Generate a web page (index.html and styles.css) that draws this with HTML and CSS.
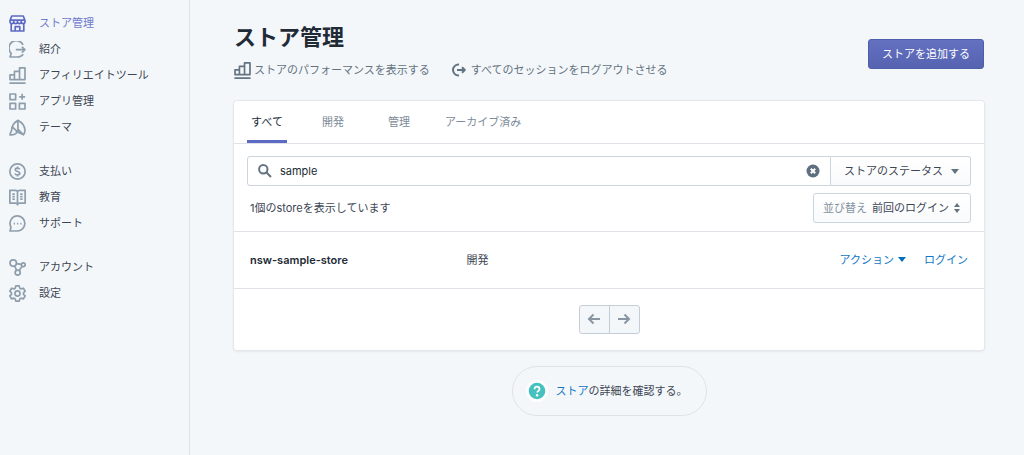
FILE: index.html
```html
<!DOCTYPE html>
<html lang="ja">
<head>
<meta charset="utf-8">
<meta name="viewport" content="width=device-width, initial-scale=1">
<title>ストア管理</title>
<link rel="stylesheet" href="styles.css">
</head>
<body>
<div class="layout">
  <nav class="sidebar" aria-label="メイン">
    <ul class="nav-group">
      <li><a class="nav-item nav-item-active" href="#stores" aria-current="page">
        <svg class="icon" viewBox="0 0 20 20"><path d="M3.2 1.2h13.600l2 5.300v1.500a2.200 2.200 0 0 1-4.400 0a2.200 2.200 0 0 1-4.400 0a2.200 2.200 0 0 1-4.400 0a2.200 2.200 0 0 1-4.400 0v-1.500zM1.500 6h17M5.600 6v2M10 6v2M14.400 6v2M2.600 10.500v8.300h14.800v-8.300M7.300 18.500v-4.800h5.400v4.800"/></svg>
        <span>ストア管理</span></a></li>
      <li><a class="nav-item" href="#referrals">
        <svg class="icon" viewBox="0 0 20 20"><path d="M16.500 4.500A8.700 8.700 0 1 0 2.600 14.500L1.200 18.800H10a8.500 8.500 0 0 0 6.800-3.300M8 10.200h10.500M15.200 6.800l3.500 3.400l-3.500 3.400"/></svg>
        <span>紹介</span></a></li>
      <li><a class="nav-item" href="#affiliate">
        <svg class="icon" viewBox="0 0 20 20"><path d="M1.200 9.200h5.200v5.600H1.200zM6.400 5.200h6v9.600h-6zM12.400 1h6.400v13.800h-6.400zM.5 19h19"/></svg>
        <span>アフィリエイトツール</span></a></li>
      <li><a class="nav-item" href="#apps">
        <svg class="icon" viewBox="0 0 20 20"><path d="M1.200 1.200h6.600v6.600H1.200zM1.200 12.200h6.600v6.600H1.200zM12.200 12.200h6.600v6.600h-6.600zM15.500 1v7M12 4.500h7"/></svg>
        <span>アプリ管理</span></a></li>
      <li><a class="nav-item" href="#themes">
        <svg class="icon" viewBox="0 0 20 20"><path d="M10.500 1.500c-3 1.800-5.500 4.300-6.700 7.700l6.700 6.300zM10.500 1.500c4.500 2.500 8 6.500 8.300 11.500c.1 2.300-.7 4-1.800 5.600L10.500 12M3.800 9.200c-1.100 1.400 0 2.300-.7 4c-.5 1.600-1.600 2.700-1.900 5.400c3 .3 5.300.1 6.800-1.300c.8-.8 1-1.900.6-3M10.500 2v11.500M10.500 15.500L17 18.600"/></svg>
        <span>テーマ</span></a></li>
    </ul>
    <ul class="nav-group">
      <li><a class="nav-item" href="#payouts">
        <svg class="icon" viewBox="0 0 20 20"><circle cx="10" cy="10" r="9"/><path d="M12.600 7.500c-.4-1-1.400-1.500-2.600-1.500c-1.500 0-2.600.7-2.600 1.900c0 2.700 5.400 1.400 5.400 4.200c0 1.200-1.200 1.900-2.800 1.900c-1.400 0-2.500-.6-2.900-1.700M10 4v2M10 14v2"/></svg>
        <span>支払い</span></a></li>
      <li><a class="nav-item" href="#education">
        <svg class="icon" viewBox="0 0 20 20"><path d="M1 1.500h6.500c1.500 0 2.500.8 2.500 2c0-1.200 1-2 2.500-2H19v15h-6.500c-1.300 0-2.500.6-2.500 2c0-1.400-1.200-2-2.500-2H1zM10 3.500V19M4 6h2.800M4 9h2.800M4 12h2.800M13.200 6H16M13.200 9H16M13.200 12H16"/></svg>
        <span>教育</span></a></li>
      <li><a class="nav-item" href="#support">
        <svg class="icon" viewBox="0 0 20 20"><path d="M10.200 1a8.900 8.900 0 1 1-1 17.800H1.200l1.200-4.500A8.900 8.900 0 0 1 10.200 1z"/><path d="M5.500 10.200h1.500M9.400 10.200h1.500M13.300 10.200h1.500"/></svg>
        <span>サポート</span></a></li>
    </ul>
    <ul class="nav-group">
      <li><a class="nav-item" href="#account">
        <svg class="icon" viewBox="0 0 20 20"><circle cx="5" cy="4.800" r="3.800"/><circle cx="16.800" cy="6.800" r="2.200"/><circle cx="10.200" cy="16" r="3"/><path d="M8.800 5.400l5.800 1M6.700 8.200l2.200 5M15.500 8.600l-3.600 4.900"/></svg>
        <span>アカウント</span></a></li>
      <li><a class="nav-item" href="#settings">
        <svg class="icon" viewBox="0 0 20 20"><path d="M8 1h4l.7 2.700l1.600.9l2.700-.8l2 3.500l-2 1.900v1.700l2 1.900l-2 3.500l-2.700-.8l-1.600.9L12 19H8l-.7-2.600l-1.600-.9l-2.700.8l-2-3.500l2-1.900V9.200l-2-1.900l2-3.500l2.700.8l1.600-.9z"/><circle cx="10" cy="10" r="3"/></svg>
        <span>設定</span></a></li>
    </ul>
  </nav>

  <main class="main">
    <header class="page-header">
      <div class="page-heading">
        <h1 class="page-title">ストア管理</h1>
        <div class="page-links">
          <a class="page-link" href="#performance">
            <svg class="icon" viewBox="0 0 20 20"><path d="M1.200 9.200h5.200v5.600H1.200zM6.400 5.200h6v9.600h-6zM12.400 1h6.400v13.800h-6.400zM.5 19h19"/></svg>
            <span>ストアのパフォーマンスを表示する</span></a>
          <a class="page-link page-link-spaced" href="#logout">
            <svg class="icon icon-small" viewBox="0 0 14 14"><path d="M7 1.500H6.500a5.500 5.500 0 0 0 0 11H7M5 7h7.500M10 4.300L12.800 7L10 9.700"/></svg>
            <span>すべてのセッションをログアウトさせる</span></a>
        </div>
      </div>
      <button class="button-primary" type="button">ストアを追加する</button>
    </header>

    <section class="card">
      <div class="tabs" role="tablist">
        <button class="tab" type="button" role="tab" aria-selected="true">すべて</button>
        <button class="tab" type="button" role="tab" aria-selected="false">開発</button>
        <button class="tab" type="button" role="tab" aria-selected="false">管理</button>
        <button class="tab" type="button" role="tab" aria-selected="false">アーカイブ済み</button>
      </div>

      <div class="filters">
        <div class="search-row">
          <div class="search-field">
            <svg class="search-icon" viewBox="0 0 14 14"><circle cx="5.300" cy="5.300" r="4.200"/><path d="M8.500 8.500l4.500 4.500"/></svg>
            <input class="search-input" type="text" value="sample" aria-label="ストアを検索">
            <button class="clear-button" type="button" aria-label="クリア">
              <svg class="clear-icon" viewBox="0 0 14 14"><circle cx="7" cy="7" r="6.500"/><path d="M4.800 4.800l4.400 4.400M9.200 4.800L4.800 9.200"/></svg>
            </button>
          </div>
          <button class="status-button" type="button" aria-haspopup="true">
            <span>ストアのステータス</span>
            <svg class="caret" viewBox="0 0 8 5"><path d="M0 0h8L4 5z"/></svg>
          </button>
        </div>
        <div class="sort-row">
          <p class="count">1個のstoreを表示しています</p>
          <div class="sort">
            <label class="sort-label" for="sort">並び替え</label>
            <select class="sort-select" id="sort"><option>前回のログイン</option></select>
            <svg class="sort-arrows" viewBox="0 0 6 10"><path d="M0 4h6L3 0zM0 6h6l-3 4z"/></svg>
          </div>
        </div>
      </div>

      <table class="stores" aria-label="ストア">
        <tbody>
          <tr>
            <th class="store-name" scope="row">nsw-sample-store</th>
            <td class="store-type">開発</td>
            <td class="store-actions">
              <div class="action-list">
                <button class="action-button" type="button" aria-haspopup="true">
                  <span>アクション</span>
                  <svg class="caret" viewBox="0 0 8 5"><path d="M0 0h8L4 5z"/></svg>
                </button>
                <a class="link" href="#login">ログイン</a>
              </div>
            </td>
          </tr>
        </tbody>
      </table>

      <div class="pagination">
        <button class="page-button" type="button" aria-label="前へ">
          <svg class="arrow" viewBox="0 0 14 12"><path d="M13 6H2M6.500 1.500L2 6l4.500 4.500"/></svg>
        </button>
        <button class="page-button" type="button" aria-label="次へ">
          <svg class="arrow" viewBox="0 0 14 12"><path d="M1 6h11M7.500 1.500L12 6l-4.500 4.500"/></svg>
        </button>
      </div>
    </section>

    <footer class="help">
      <svg class="help-icon" viewBox="0 0 22 22"><circle cx="11" cy="11" r="11" fill="#fff"/><circle cx="11" cy="11" r="8.300" fill="#47c1bf"/><path d="M8.500 9.200c0-3.400 5-3.400 5 0c0 1.800-2.400 1.700-2.400 3.400" fill="none" stroke="#fff" stroke-width="1.800"/><circle cx="11.100" cy="15.200" r="1.200" fill="#fff"/></svg>
      <p class="help-text"><a class="link" href="#help">ストア</a>の詳細を確認する。</p>
    </footer>
  </main>
</div>
</body>
</html>
```
FILE: styles.css
```css
* {
  box-sizing: border-box;
}

body {
  margin: 0;
  background: #f4f7fa;
  color: #3c4654;
  font-family: Inter, "Noto Sans CJK JP", sans-serif;
  font-size: 11px;
  line-height: 16px;
}

button,
input,
select {
  margin: 0;
  padding: 0;
  border: 0;
  background: none;
  color: inherit;
  font: inherit;
}

a {
  text-decoration: none;
}

svg {
  display: block;
  flex: none;
}

.layout {
  display: flex;
  min-height: 100vh;
}

.sidebar {
  display: flex;
  flex: none;
  flex-direction: column;
  gap: 18px;
  width: 190px;
  padding: 10px 8px;
  border-right: 1px solid #dfe3e8;
}

.nav-group {
  margin: 0;
  padding: 0;
  list-style: none;
}

.nav-item {
  display: flex;
  align-items: center;
  gap: 13px;
  height: 26px;
  padding-left: 1px;
  color: #3c4654;
}

.icon {
  width: 17px;
  height: 17px;
  fill: none;
  stroke: #8f9eac;
  stroke-width: 2;
  stroke-linejoin: round;
}

.nav-item-active {
  color: #6f7bcb;
}

.nav-item-active .icon {
  stroke: #5c6ac4;
}

.main {
  flex: 1;
  min-width: 0;
  padding: 21px 40px 40px 44px;
}

.page-header {
  display: flex;
  align-items: flex-end;
  justify-content: space-between;
  margin-bottom: 22px;
}

.page-title {
  margin: 0 0 8px;
  color: #212b36;
  font-size: 22px;
  font-weight: 700;
  line-height: 32px;
}

.page-links {
  display: flex;
  gap: 22px;
}

.page-link {
  display: flex;
  align-items: center;
  gap: 3px;
  height: 18px;
  color: #637381;
}

.page-link-spaced {
  gap: 5px;
}

.page-link .icon {
  stroke: #637381;
}

.page-link .icon-small {
  width: 14px;
  height: 14px;
}

.button-primary {
  height: 30px;
  margin-bottom: 10px;
  padding: 0 13px;
  border: 1px solid #4f5dad;
  border-radius: 3px;
  background: linear-gradient(#6371c0, #5563b1);
  color: #fff;
}

.card {
  border-radius: 3px;
  background: #fff;
  box-shadow: 0 0 0 1px #e3e8ed, 0 1px 3px #d2d8df;
}

.tabs {
  display: flex;
  gap: 26px;
  padding: 0 13px;
  border-bottom: 1px solid #dfe3e8;
}

.tab {
  min-width: 40px;
  height: 42px;
  padding-top: 3px;
  border-bottom: 3px solid transparent;
  color: #7d8b99;
}

.tab[aria-selected="true"] {
  border-bottom-color: #5c6ac4;
  color: #212b36;
}

.filters {
  display: grid;
  gap: 7px;
  padding: 12px 13px 8px;
  border-bottom: 1px solid #dfe3e8;
}

.search-row {
  display: flex;
}

.search-field {
  display: flex;
  flex: 1;
  align-items: center;
  gap: 8px;
  height: 30px;
  padding: 0 10px;
  border: 1px solid #ccd5dd;
  border-radius: 3px 0 0 3px;
}

.search-icon {
  width: 14px;
  height: 14px;
  fill: none;
  stroke: #637381;
  stroke-width: 2;
}

.search-input {
  flex: 1;
  min-width: 0;
  color: #212b36;
}

.clear-icon {
  width: 14px;
  height: 14px;
  fill: #5d6f80;
}

.clear-icon path {
  stroke: #fff;
  stroke-width: 2;
}

.status-button {
  display: flex;
  align-items: center;
  gap: 8px;
  height: 30px;
  padding: 0 11px 0 13px;
  border: 1px solid #ccd5dd;
  border-left: 0;
  border-radius: 0 3px 3px 0;
  background: linear-gradient(#fff, #f9fafb);
}

.caret {
  width: 8px;
  height: 5px;
  fill: #637381;
}

.sort-row {
  display: flex;
  align-items: center;
  justify-content: space-between;
}

.count {
  margin: 0;
  padding-left: 3px;
}

.sort {
  display: flex;
  align-items: center;
  gap: 5px;
  height: 30px;
  padding: 0 10px 0 9px;
  border: 1px solid #ccd5dd;
  border-radius: 3px;
  background: linear-gradient(#fff, #f9fafb);
}

.sort-label {
  color: #8592a0;
}

.sort-select {
  appearance: none;
}

.sort-arrows {
  width: 6px;
  height: 10px;
  fill: #637381;
}

.stores {
  width: 100%;
  border-collapse: collapse;
  border-bottom: 1px solid #dfe3e8;
  table-layout: fixed;
}

.stores th,
.stores td {
  height: 56px;
  padding: 0;
  text-align: left;
}

.stores .store-name {
  width: 31%;
  padding-left: 16px;
  color: #212b36;
  font-weight: 600;
}

.stores .store-actions {
  padding-right: 16px;
}

.action-list {
  display: flex;
  align-items: center;
  justify-content: flex-end;
  gap: 18px;
}

.action-button {
  display: flex;
  align-items: center;
  gap: 4px;
  color: #1177c4;
}

.action-button .caret {
  fill: #006fbb;
}

.link {
  color: #1177c4;
}

.pagination {
  display: flex;
  justify-content: center;
  padding: 16px;
}

.page-button {
  display: grid;
  place-items: center;
  width: 31px;
  height: 29px;
  border: 1px solid #c4cdd5;
  border-radius: 3px 0 0 3px;
  background: #f4f7fa;
}

.page-button + .page-button {
  margin-left: -1px;
  border-radius: 0 3px 3px 0;
}

.arrow {
  width: 14px;
  height: 12px;
  fill: none;
  stroke: #8896a3;
  stroke-width: 2;
}

.help {
  display: flex;
  align-items: center;
  gap: 8px;
  width: fit-content;
  height: 50px;
  margin: 16px auto 0;
  padding: 0 18px 0 13px;
  border: 1px solid #dfe3e8;
  border-radius: 25px;
}

.help-icon {
  width: 22px;
  height: 22px;
}

.help-text {
  margin: 0;
}
```
